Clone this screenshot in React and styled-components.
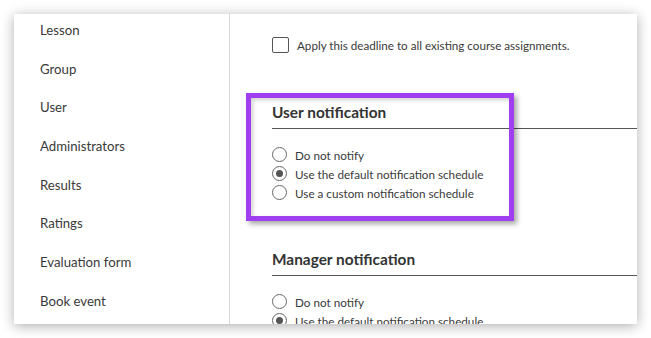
import React from "react";
import styled, { createGlobalStyle } from "styled-components";

const Global = createGlobalStyle`
  html, body { margin: 0; padding: 0; background: #ffffff; }
  body { font-family: Lato, "Open Sans", Arial, sans-serif; color: #333; }
  * { box-sizing: border-box; }
`;

const Stage = styled.div`
  width: 651px;
  height: 338px;
  padding: 14px;
  overflow: hidden;
`;

const Panel = styled.div`
  display: flex;
  width: 623px;
  height: 310px;
  background: #fff;
  box-shadow: 0 2px 12px rgba(0, 0, 0, 0.32);
  overflow: hidden;
`;

const Sidebar = styled.nav`
  width: 216px;
  flex: none;
  border-right: 1px solid #d9d9d9;
  padding-left: 26px;
  display: flex;
  flex-direction: column;
  margin-top: -3.4px;
`;

const NavItem = styled.div`
  height: 38.7px;
  display: flex;
  align-items: center;
  font-size: 13.2px;
  color: #3a3a3a;
`;

const Main = styled.main`
  position: relative;
  flex: 1;
  padding: 23px 0 0 42px;
  display: flex;
  flex-direction: column;
`;

const CheckRow = styled.label`
  display: flex;
  align-items: center;
  gap: 8px;
  height: 16px;
  font-size: 11.65px;
  color: #3a3a3a;
`;

const CheckBox = styled.span`
  width: 17px;
  height: 16px;
  border: 1.5px solid #555;
  border-radius: 2px;
  background: #fff;
  flex: none;
`;

const Heading = styled.h3`
  margin: ${(p) => p.$top}px 0 0 0;
  font-size: 15.4px;
  line-height: 18px;
  font-weight: 700;
  color: #333;
  padding-bottom: 7px;
  border-bottom: 1px solid #555;
`;

const RadioList = styled.div`
  display: flex;
  flex-direction: column;
  margin-top: 16px;
`;

const RadioRow = styled.div`
  height: 19px;
  display: flex;
  align-items: center;
  gap: 8px;
  font-size: 11.7px;
  color: #3a3a3a;
`;

const Radio = styled.span`
  width: 15px;
  height: 15px;
  border-radius: 50%;
  border: 1px solid #666;
  background: #fff;
  flex: none;
  display: flex;
  align-items: center;
  justify-content: center;
  &::after {
    content: "";
    width: 7px;
    height: 7px;
    border-radius: 50%;
    background: ${(p) => (p.$checked ? "#555" : "transparent")};
  }
`;

const Highlight = styled.div`
  position: absolute;
  left: 16px;
  top: 79px;
  width: 268px;
  height: 128px;
  border: 5px solid #9f3ff0;
  box-shadow: 3px 3px 5px rgba(0, 0, 0, 0.35), inset 2px 2px 4px rgba(0, 0, 0, 0.18);
  pointer-events: none;
`;

const navItems = [
  "Lesson",
  "Group",
  "User",
  "Administrators",
  "Results",
  "Ratings",
  "Evaluation form",
  "Book event",
];

const options = [
  "Do not notify",
  "Use the default notification schedule",
  "Use a custom notification schedule",
];

function Section({ title, top }) {
  return (
    <>
      <Heading $top={top}>{title}</Heading>
      <RadioList>
        {options.map((o, i) => (
          <RadioRow key={o}>
            <Radio $checked={i === 1} />
            {o}
          </RadioRow>
        ))}
      </RadioList>
    </>
  );
}

export default function App() {
  return (
    <>
      <Global />
      <Stage>
        <Panel>
          <Sidebar>
            {navItems.map((n) => (
              <NavItem key={n}>{n}</NavItem>
            ))}
          </Sidebar>
          <Main>
            <CheckRow>
              <CheckBox />
              Apply this deadline to all existing course assignments.
            </CheckRow>
            <Section title="User notification" top={50} />
            <Section title="Manager notification" top={48} />
            <Highlight />
          </Main>
        </Panel>
      </Stage>
    </>
  );
}
